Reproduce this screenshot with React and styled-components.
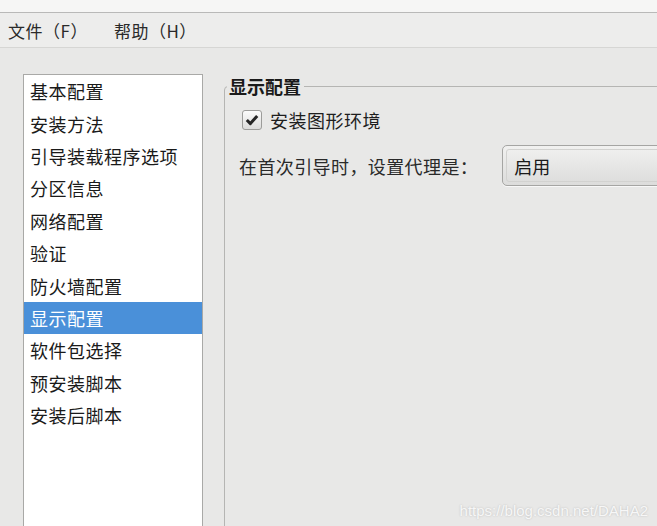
import React from 'react'
import styled, { createGlobalStyle } from 'styled-components'

const GlobalStyle = createGlobalStyle`
    html, body {
        margin: 0;
        padding: 0;
        background: #e8e8e7;
    }
    body {
        font-family: "Noto Sans CJK SC", "DejaVu Sans", sans-serif;
        color: #1e1e1e;
    }
`

const items = [
    '基本配置',
    '安装方法',
    '引导装载程序选项',
    '分区信息',
    '网络配置',
    '验证',
    '防火墙配置',
    '显示配置',
    '软件包选择',
    '预安装脚本',
    '安装后脚本',
]

const CheckIcon = () => (
    <svg width="14" height="12" viewBox="0 0 14 12">
        <path d="M1.8 6 L5.4 9.6 L12.2 2" fill="none" stroke="#262626" strokeWidth="3" strokeLinejoin="round" />
    </svg>
)

const App = () => {
    return (
        <Window>
            <GlobalStyle />
            <TopStrip />
            <MenuBar>
                <MenuItem>文件（F）</MenuItem>
                <MenuItem>帮助（H）</MenuItem>
            </MenuBar>
            <Main>
                <SectionList>
                    {items.map((item) => (
                        <SectionItem key={item} selected={item === '显示配置'}>
                            {item}
                        </SectionItem>
                    ))}
                </SectionList>
                <GroupBox>
                    <GroupTitle>显示配置</GroupTitle>
                    <CheckRow>
                        <CheckBox>
                            <CheckIcon />
                        </CheckBox>
                        <span>安装图形环境</span>
                    </CheckRow>
                    <FieldRow>
                        <FieldLabel>在首次引导时，设置代理是：</FieldLabel>
                        <Combo>
                            <ComboInner>启用</ComboInner>
                        </Combo>
                    </FieldRow>
                </GroupBox>
            </Main>
            <Watermark>https://blog.csdn.net/DAHA2</Watermark>
        </Window>
    )
}

export default App

const Window = styled.div`
    position: relative;
    width: 657px;
    height: 526px;
    overflow: hidden;
    display: flex;
    flex-direction: column;
    background: #e8e8e7;
`

const TopStrip = styled.div`
    height: 12px;
    flex-shrink: 0;
    background: #f6f6f5;
    border-bottom: 1px solid #b9b9b8;
`

const MenuBar = styled.div`
    height: 34px;
    flex-shrink: 0;
    display: flex;
    align-items: center;
    gap: 26px;
    padding-left: 8px;
    background: #ededec;
    border-bottom: 1px solid #d6d6d4;
`

const MenuItem = styled.span`
    font-size: 17px;
    color: #2a2a2a;
    letter-spacing: 0.5px;
`

const Main = styled.div`
    flex: 1;
    display: flex;
    align-items: flex-start;
    gap: 21px;
    padding: 26px 0 0 23px;
    overflow: hidden;
`

const SectionList = styled.div`
    flex-shrink: 0;
    width: 178px;
    height: 470px;
    background: #ffffff;
    border: 1px solid #a9a9a7;
    box-sizing: content-box;
`

const SectionItem = styled.div`
    height: 32.4px;
    display: flex;
    align-items: center;
    padding-left: 6px;
    font-size: 18px;
    letter-spacing: 0.5px;
    white-space: nowrap;
    background: ${(p) => (p.selected ? '#4a90d9' : 'transparent')};
    color: ${(p) => (p.selected ? '#ffffff' : '#1a1a1a')};
`

const GroupBox = styled.fieldset`
    flex-shrink: 0;
    width: 460px;
    height: 480px;
    margin: 1px 0 0 0;
    padding: 0 0 0 14px;
    border: 1px solid #b5b5b3;
    border-radius: 4px 0 0 0;
    box-sizing: border-box;
`

const GroupTitle = styled.legend`
    margin-left: -12px;
    padding: 0 3px 0 2px;
    font-size: 18px;
    line-height: 22px;
    font-weight: 700;
    color: #1a1a1a;
`

const CheckRow = styled.div`
    display: flex;
    align-items: center;
    gap: 8px;
    margin: 13px 0 0 3px;
    height: 20px;
    font-size: 18px;
    letter-spacing: 0.5px;
`

const CheckBox = styled.div`
    width: 18px;
    height: 18px;
    display: flex;
    align-items: center;
    justify-content: center;
    border: 1px solid #9c9c9a;
    border-radius: 3px;
    background: linear-gradient(#fbfbfb, #dcdcdb);
`

const FieldRow = styled.div`
    display: flex;
    align-items: center;
    gap: 24px;
    margin-top: 15px;
`

const FieldLabel = styled.span`
    flex-shrink: 0;
    white-space: nowrap;
    font-size: 18px;
    letter-spacing: 0.4px;
    color: #2a2a2a;
`

const Combo = styled.div`
    flex-shrink: 0;
    width: 220px;
    height: 41px;
    padding: 3px;
    box-sizing: border-box;
    border: 1px solid #a5a5a3;
    border-radius: 5px;
    background: linear-gradient(#f1f1f0, #dcdcdb);
    box-shadow: 0 1px 0 #f8f8f8;
`

const ComboInner = styled.div`
    height: 100%;
    display: flex;
    align-items: center;
    padding-left: 7px;
    box-sizing: border-box;
    border: 1px solid #d2d2d0;
    border-radius: 3px;
    font-size: 18px;
    color: #1a1a1a;
`

const Watermark = styled.div`
    position: absolute;
    right: 9px;
    bottom: 7px;
    font-family: "Liberation Sans", Arial, sans-serif;
    font-size: 15px;
    color: #f7f7f7;
    text-shadow: 0 0 2px #b8b8b8;
`
